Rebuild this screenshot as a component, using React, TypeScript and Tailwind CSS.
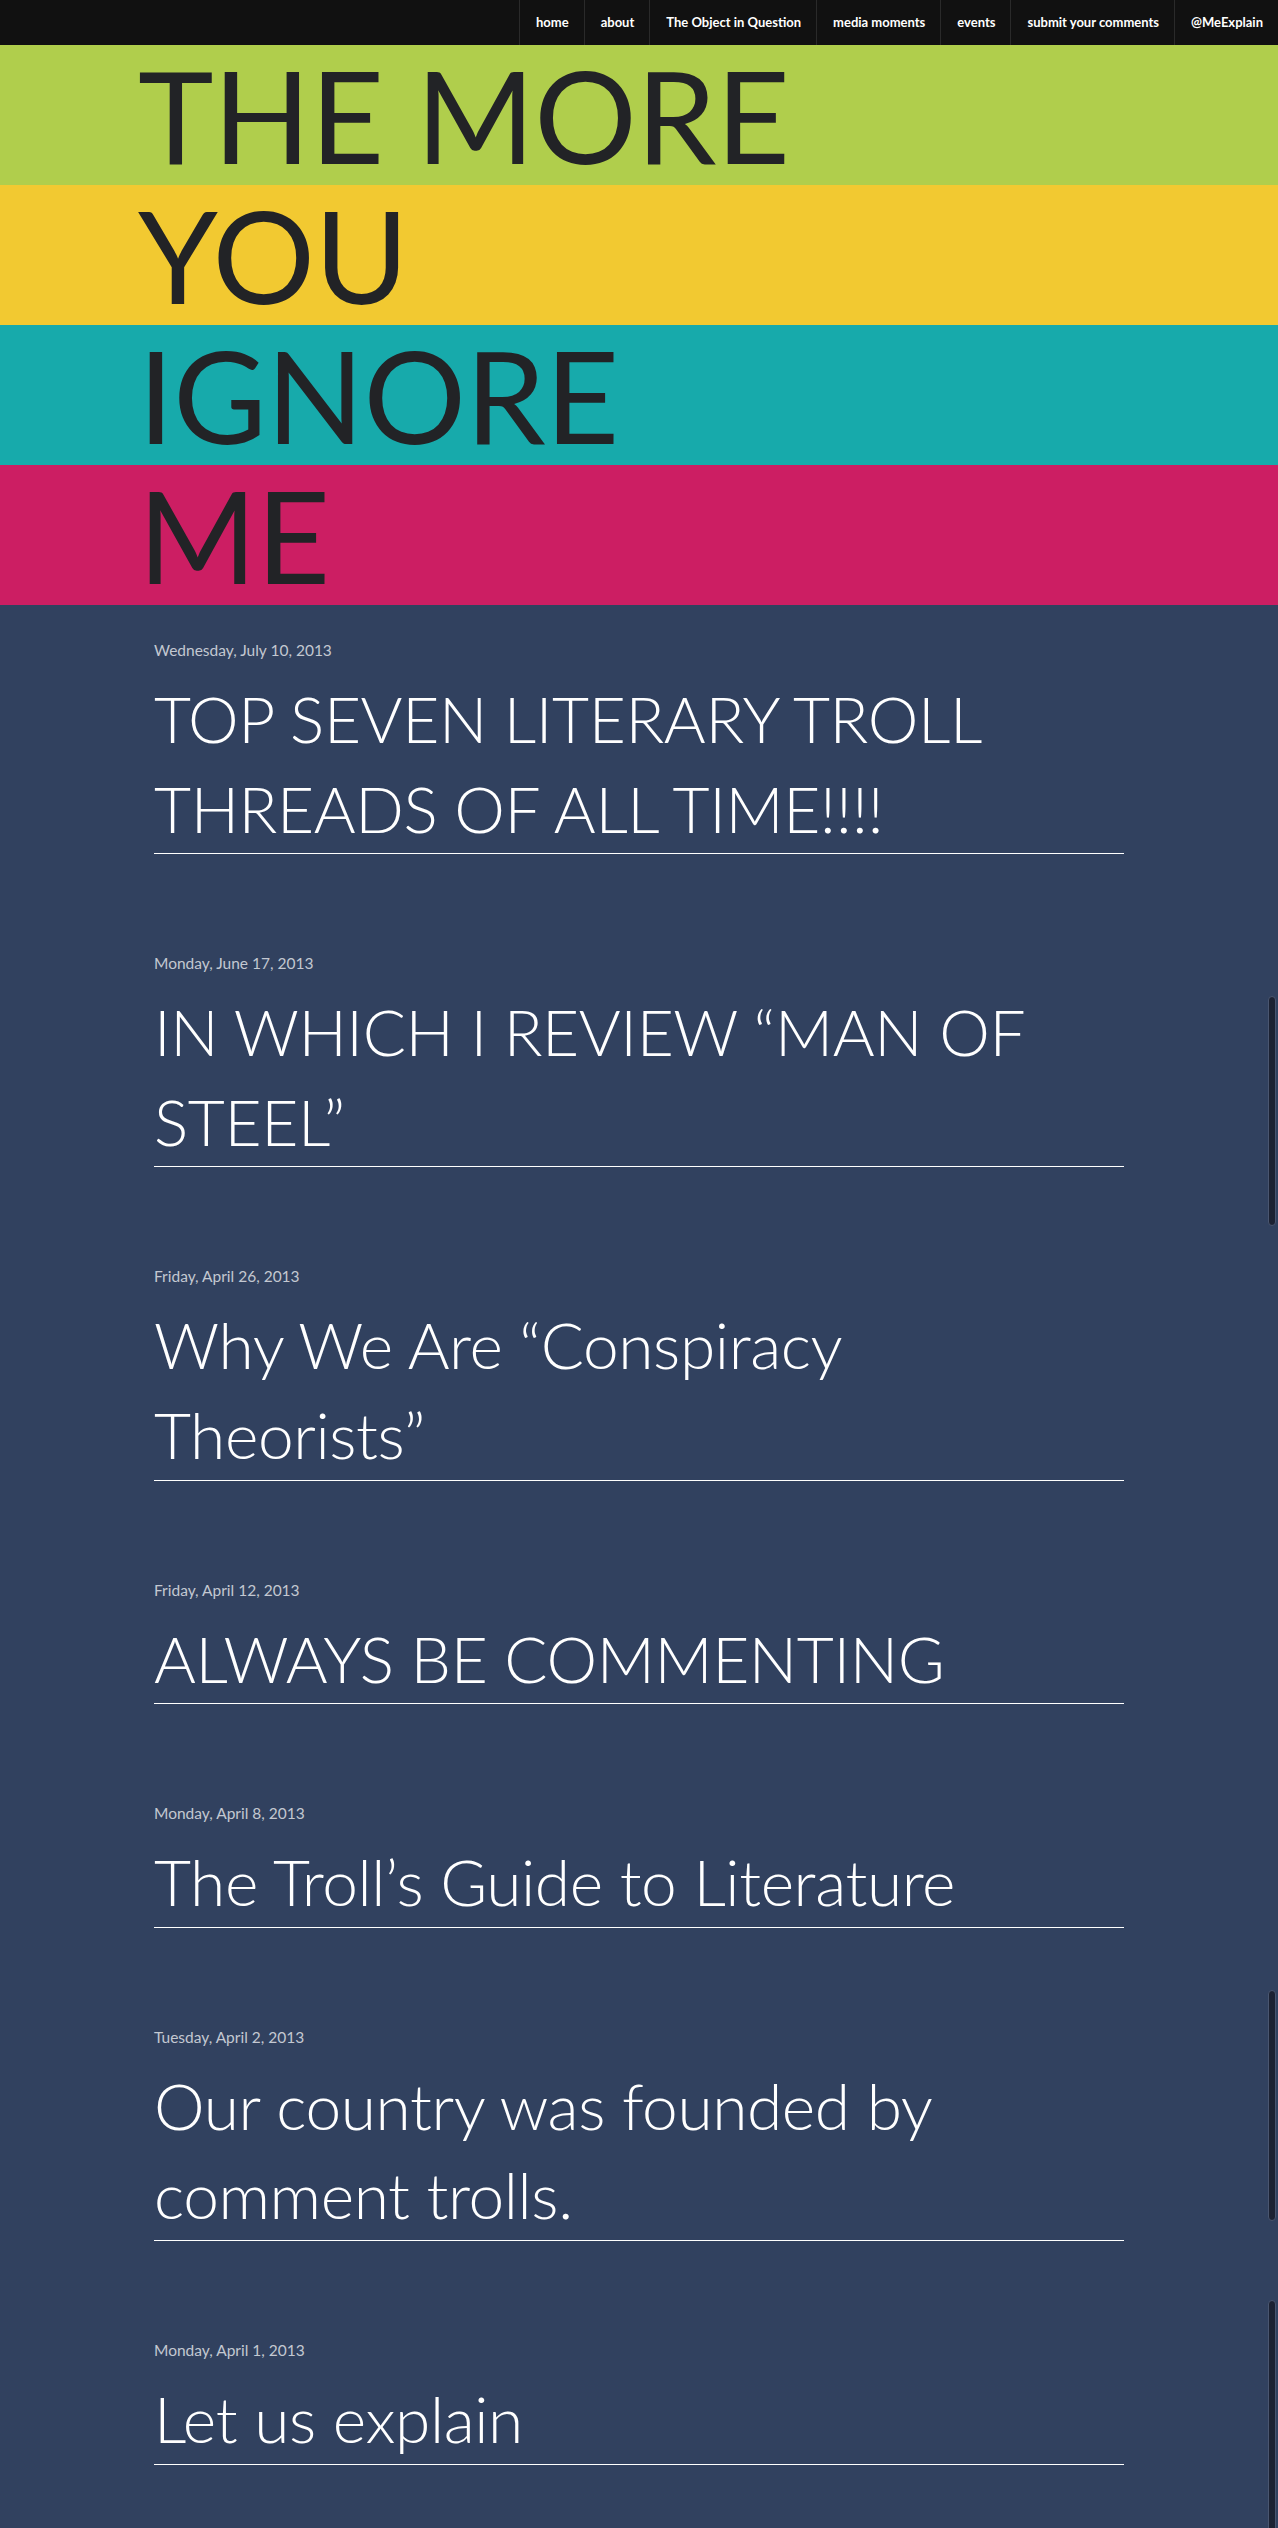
const navItems = [
  "home",
  "about",
  "The Object in Question",
  "media moments",
  "events",
  "submit your comments",
  "@MeExplain",
];

const bands = [
  { word: "THE MORE", bg: "bg-[#b0ce4c]" },
  { word: "YOU", bg: "bg-[#f2c931]" },
  { word: "IGNORE", bg: "bg-[#17aaab]" },
  { word: "ME", bg: "bg-[#cc1e63]" },
];

const posts = [
  { date: "Wednesday, July 10, 2013", title: "TOP SEVEN LITERARY TROLL THREADS OF ALL TIME!!!!" },
  { date: "Monday, June 17, 2013", title: "IN WHICH I REVIEW \u201cMAN OF STEEL\u201d" },
  { date: "Friday, April 26, 2013", title: "Why We Are \u201cConspiracy Theorists\u201d" },
  { date: "Friday, April 12, 2013", title: "ALWAYS BE COMMENTING" },
  { date: "Monday, April 8, 2013", title: "The Troll\u2019s Guide to Literature" },
  { date: "Tuesday, April 2, 2013", title: "Our country was founded by comment trolls." },
  { date: "Monday, April 1, 2013", title: "Let us explain" },
];

// the dark bars on the right edge of the screenshot
const bars = ["top-[996px] h-[230px]", "top-[1990px] h-[231px]", "top-[2300px] h-[240px]"];

export default function App() {
  return (
    <div className="relative min-h-[2528px] overflow-hidden bg-[#31415f] font-['Lato','Liberation_Sans',sans-serif]">
      {/* Top nav */}
      <nav className="flex h-[45px] justify-end bg-[#111111]">
        {navItems.map((item) => (
          <a
            key={item}
            href="#"
            className="flex items-center border-l border-[#2a2a2a] pl-[16px] pr-[15px] text-[13px] font-bold text-white"
          >
            {item}
          </a>
        ))}
      </nav>

      {/* Header bands */}
      <header>
        {bands.map((band) => (
          <div key={band.word} className={`${band.bg} h-[140px]`}>
            <h1 className="pl-[138px] text-[128px] leading-[140px] font-normal tracking-[-0.5px] whitespace-nowrap text-[#222326]">
              {band.word}
            </h1>
          </div>
        ))}
      </header>

      {/* Posts */}
      <main className="ml-[154px] w-[970px] pt-[35px]">
        {posts.map((post) => (
          <article key={post.date} className="mb-[99px]">
            <div className="text-[15.5px] leading-[20px] text-[#c3c8d1]">{post.date}</div>
            <h2 className="mt-[14px] border-b border-white text-[64px] leading-[1.4] font-light tracking-[-0.4px] text-white">
              {post.title}
            </h2>
          </article>
        ))}
      </main>

      {bars.map((b) => (
        <div
          key={b}
          className={`absolute right-[2px] w-[8px] rounded-full border border-[#4a5670] bg-[#1c2233] ${b}`}
        />
      ))}
    </div>
  );
}
